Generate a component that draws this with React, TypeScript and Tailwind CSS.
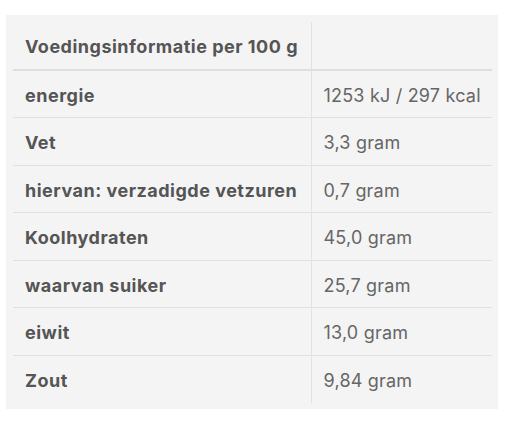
import React from "react";

const rows: [string, string][] = [
  ["energie", "1253 kJ / 297 kcal"],
  ["Vet", "3,3 gram"],
  ["hiervan: verzadigde vetzuren", "0,7 gram"],
  ["Koolhydraten", "45,0 gram"],
  ["waarvan suiker", "25,7 gram"],
  ["eiwit", "13,0 gram"],
  ["Zout", "9,84 gram"],
];

const App = () => {
  return (
    <div className="w-[510px] h-[422px] bg-white pt-[15px] pl-[6px] font-['Inter',sans-serif]">
      <div className="w-[492px] h-[394px] bg-[#f4f4f4] pl-[7px] pt-[7px]">
        <table className="w-[479px] border-collapse text-[18px] text-[#555]">
          <thead>
            <tr className="h-[48px] border-b-2 border-[#dedede]">
              <th className="w-[298px] pl-3 pt-[2px] text-left font-bold tracking-[0.5px] border-r border-[#e2e2e2]">
                Voedingsinformatie per 100 g
              </th>
              <th />
            </tr>
          </thead>
          <tbody>
            {rows.map(([label, value], i) => (
              <tr
                key={label}
                className={i < rows.length - 1 ? "h-[47.5px] border-b border-[#e0e0e0]" : "h-[47.5px]"}
              >
                <td className="pl-3 pt-[3px] font-bold tracking-[0.5px] border-r border-[#e2e2e2]">{label}</td>
                <td className="pl-3 pt-[3px] text-[#666] tracking-[0.2px]">{value}</td>
              </tr>
            ))}
          </tbody>
        </table>
      </div>
    </div>
  );
};

export default App;
